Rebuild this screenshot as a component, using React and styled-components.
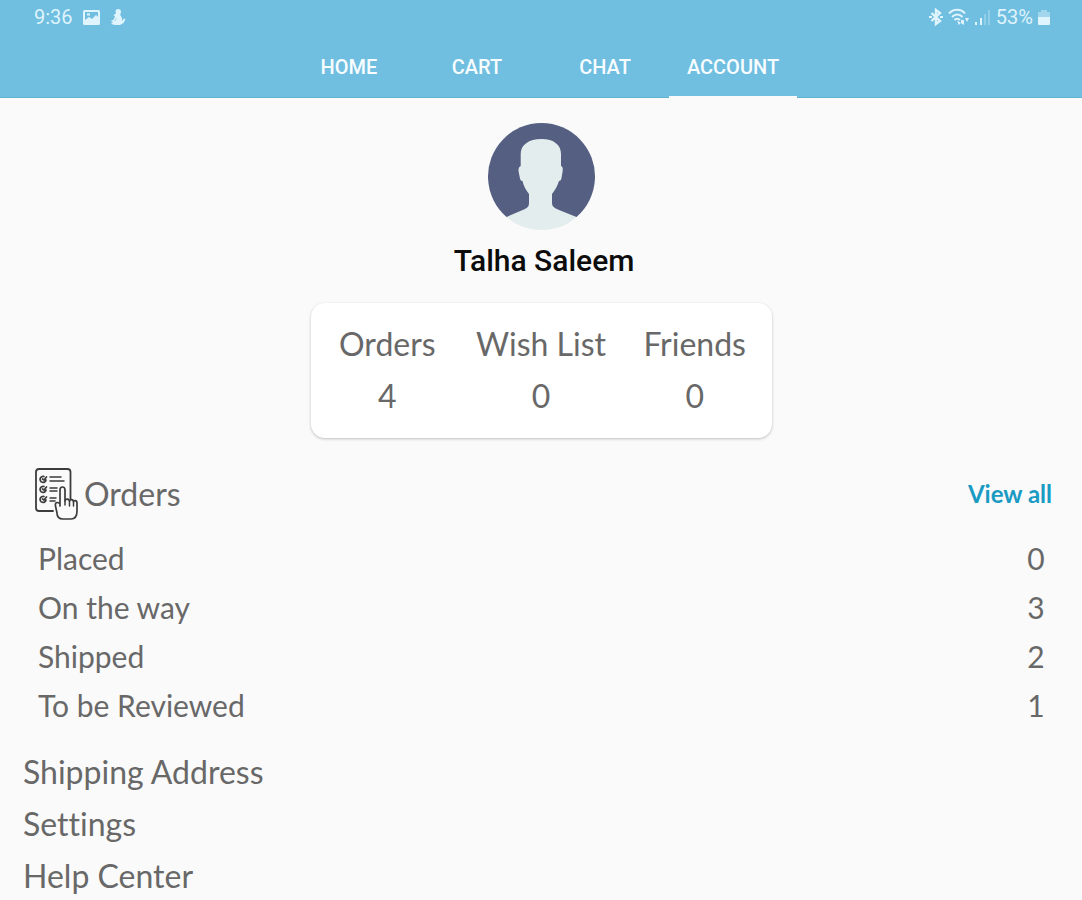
import React, { useState } from "react";
import styled, { createGlobalStyle } from "styled-components";

const GlobalStyle = createGlobalStyle`
  * {
    box-sizing: border-box;
  }

  body {
    margin: 0;
    background: #fafafa;
    color: #686868;
    font-family: Lato, "Liberation Sans", sans-serif;
    font-variant-ligatures: none;
  }
`;

const AppBar = styled.header`
  background: #70bee0;
  box-shadow: inset 0 -1px #62b3d3;
  font-family: Roboto, "Liberation Sans", sans-serif;
`;

const StatusBar = styled.div`
  display: flex;
  align-items: center;
  justify-content: space-between;
  height: 34px;
  padding: 0 32px 0 34px;
  color: #dff4fc;
  font-size: 20px;
`;

const StatusGroup = styled.div`
  display: flex;
  align-items: center;
  gap: ${props => props.$gap}px;

  svg {
    display: block;
  }
`;

const Tabs = styled.nav`
  display: flex;
  justify-content: center;
`;

const Tab = styled.a`
  display: flex;
  align-items: center;
  justify-content: center;
  width: 128px;
  height: 64px;
  padding-top: 4px;
  border-bottom: 2px solid ${props => (props.$active ? "#fafafa" : "transparent")};
  color: #f8fdff;
  font-size: 20px;
  font-weight: 500;
  text-decoration: none;
`;

const Profile = styled.section`
  display: flex;
  flex-direction: column;
  align-items: center;
  padding: 25px 16px 0;

  svg {
    display: block;
  }
`;

const Name = styled.h1`
  margin: 13px 0 24px;
  padding-left: 6px;
  color: #0c0c0c;
  font-family: Roboto, "Liberation Sans", sans-serif;
  font-size: 30px;
  font-weight: 500;
  line-height: 36px;
`;

const Stats = styled.dl`
  display: flex;
  width: 100%;
  max-width: 461px;
  margin: 0;
  padding: 17px 0 18px;
  border-radius: 14px;
  background: #fff;
  box-shadow: 0 1px 3px rgba(0, 0, 0, 0.24);
`;

const Stat = styled.div`
  display: flex;
  flex: 1;
  flex-direction: column;
  align-items: center;
  gap: 4px;
  font-size: 32px;
  line-height: 48px;

  dt,
  dd {
    margin: 0;
    white-space: nowrap;
  }
`;

const Orders = styled.section`
  padding: 28px 30px 0 34px;
`;

const OrdersHead = styled.div`
  display: flex;
  align-items: center;
  gap: 6px;
  height: 56px;
`;

const Title = styled.h2`
  flex: 1;
  margin: 0;
  font-size: 32px;
  font-weight: 400;
  line-height: 40px;
`;

const ViewAll = styled.a`
  color: #1a9bc4;
  font-size: 24px;
  font-weight: 700;
  line-height: 32px;
  text-decoration: none;
`;

const StatusList = styled.ul`
  margin: 12px 0 0;
  padding: 0 0 0 4px;
  list-style: none;
`;

const StatusRow = styled.li`
  display: flex;
  justify-content: space-between;
  font-size: 30px;
  line-height: 49px;
`;

const Count = styled.span`
  width: 32px;
  text-align: center;
`;

const Menu = styled.nav`
  display: flex;
  flex-direction: column;
  align-items: flex-start;
  gap: 8px;
  padding: 20px 23px 0;
`;

const MenuLink = styled.a`
  color: inherit;
  font-size: 32px;
  line-height: 44px;
  text-decoration: none;
`;

const PictureIcon = () => (
  <svg width="17" height="15" viewBox="0 0 17 15" aria-hidden="true">
    <path
      fill="currentColor"
      fillRule="evenodd"
      d="M1.5 0h14A1.5 1.5 0 0 1 17 1.500v12a1.500 1.500 0 0 1-1.500 1.500h-14A1.500 1.500 0 0 1 0 13.500v-12A1.500 1.500 0 0 1 1.500 0zM2 2v8l4-3 3 2 4-4 2 2V2zM4 3.500h3v2H4z"
    />
  </svg>
);

const CleanerIcon = () => (
  <svg width="16" height="17" viewBox="0 0 16 17" aria-hidden="true">
    <path
      fill="currentColor"
      d="M8 0c2 0 3 1.200 3 3 0 1.200-.4 2-1 2.600l2 3.400v3l2-2.500 1.500.7-2 3.800L10 16H5l-4-1 2-2-2.500-1 2.800-1L5 7.500 3.500 6 6 4.500 5.500 2C5.800.7 6.700 0 8 0z"
    />
    <path fill="none" stroke="#a5d8ee" d="M6.500 9L5 12" />
  </svg>
);

const BluetoothIcon = () => (
  <svg width="14" height="18" viewBox="0 0 14 18" aria-hidden="true">
    <path
      fill="none"
      stroke="currentColor"
      strokeWidth="2.400"
      d="M2.500 5l8.500 8-4 3V2l4 3-8.500 8"
    />
    <path fill="currentColor" d="M0 8h3v2H0zM11 8h3v2h-3z" />
  </svg>
);

const WifiIcon = () => (
  <svg width="22" height="18" viewBox="0 0 22 18" aria-hidden="true">
    <g fill="none" stroke="currentColor" strokeWidth="2">
      <path d="M1 5.500c4.500-5 12-5 16 0M4 9c3-3.300 7.500-3.300 10.500 0M6.500 12c1.500-1.800 4-1.800 5.500 0" />
    </g>
    <path fill="currentColor" d="M9.300 12.500L13 15l-2.500 2zM13 12h3v5l-3-2zM17 10h4l-2 4z" />
  </svg>
);

const SignalIcon = () => (
  <svg width="16" height="17" viewBox="0 0 16 17" aria-hidden="true">
    <path fill="currentColor" d="M0 13h2v3H0zM5 9h2v7H5z" />
    <path fill="currentColor" opacity="0.3" d="M9 5h2v11H9zM13 1h2v15h-2z" />
  </svg>
);

const BatteryIcon = () => (
  <svg width="12" height="17" viewBox="0 0 12 17" aria-hidden="true">
    <path fill="currentColor" opacity="0.45" d="M3 1h6v2h2q1 0 1 1v5H0V4q0-1 1-1h2z" />
    <path fill="currentColor" d="M0 8h12v7q0 1-1 1H1q-1 0-1-1z" />
  </svg>
);

const Avatar = () => (
  <svg width="107" height="107" viewBox="0 0 107 107" role="img" aria-label="Avatar">
    <path fill="#545f82" d="M18.500 94A53.500 53.500 0 1 1 88.500 94z" />
    <path
      fill="#e4edee"
      d="M53.500 16C66 16 73 22 73 31v12c2 1 2 3 1.500 6l-1 6c-.3 2-1.200 3-2.500 3-1.500 5-4 9-7 13v9c0 4 3 5 7 7l17.500 7C80 102 68 107 53.500 107S27 102 18.500 94L37 86c3-1.500 4-3 4-6v-9c-3-4-5.500-8-6.500-13-1.500 0-2.300-1-2.600-3l-1.200-6c-.5-3 0-5 2-6V31c0-9 8-15 20.800-15z"
    />
  </svg>
);

const OrdersIcon = () => (
  <svg width="44" height="54" viewBox="0 0 44 54" fill="none" aria-hidden="true">
    <g stroke="#3c3c3c" strokeLinecap="round" strokeLinejoin="round">
      <path
        strokeWidth="1.800"
        d="M19 44H5q-3 0-3-3V5q0-3 3-3h28.500q3 0 3 3v27"
      />
      <g strokeWidth="1.700">
        <path d="M10 9.500a3 3 0 1 0 2 3.500M8.500 12l1.500 1 2.500-3" />
        <path d="M10 19.500a3 3 0 1 0 2 3.500M8.500 22l1.500 1 2.500-3" />
        <path d="M10 29.500a3 3 0 1 0 2 3.500M8.500 32l1.500 1 2.500-3" />
      </g>
      <path strokeWidth="1.500" d="M16 10h11M16 14h14M16 21h7M16 24h7M16 31h6M16 34h5" />
      <path
        fill="#fafafa"
        strokeWidth="1.700"
        d="M26 39V23c0-4 5-4 5 0v11c0-2.500 4.500-2.500 4.500.5 0-2.500 4-2.500 4 .5 0-2 3.500-2 3.500 1v8c0 5-2 8-6 8h-8c-4 0-6-2-6-6l-1.500-7c-.6-3.500 1-4.500 4.500-2.500"
      />
      <path strokeWidth="1.500" d="M31 34v4M35.500 35v4M39.500 35.500v3.500" />
    </g>
  </svg>
);

const tabs = ["HOME", "CART", "CHAT", "ACCOUNT"];

const stats = [
  { label: "Orders", value: 4 },
  { label: "Wish List", value: 0 },
  { label: "Friends", value: 0 }
];

const statuses = [
  { label: "Placed", count: 0 },
  { label: "On the way", count: 3 },
  { label: "Shipped", count: 2 },
  { label: "To be Reviewed", count: 1 }
];

const menu = [
  { title: "Shipping Address", href: "#address" },
  { title: "Settings", href: "#settings" },
  { title: "Help Center", href: "#help" }
];

const App = () => {
  const [active, setActive] = useState("ACCOUNT");

  return (
    <>
      <GlobalStyle />
      <AppBar>
        <StatusBar>
          <StatusGroup $gap={10}>
            <span>9:36</span>
            <PictureIcon />
            <CleanerIcon />
          </StatusGroup>
          <StatusGroup $gap={5}>
            <BluetoothIcon />
            <WifiIcon />
            <SignalIcon />
            <span>53%</span>
            <BatteryIcon />
          </StatusGroup>
        </StatusBar>
        <Tabs>
          {tabs.map(tab => (
            <Tab
              key={tab}
              href={`#${tab.toLowerCase()}`}
              $active={tab === active}
              aria-current={tab === active ? "page" : undefined}
              onClick={() => setActive(tab)}
            >
              {tab}
            </Tab>
          ))}
        </Tabs>
      </AppBar>
      <main>
        <Profile>
          <Avatar />
          <Name>Talha Saleem</Name>
          <Stats>
            {stats.map(stat => (
              <Stat key={stat.label}>
                <dt>{stat.label}</dt>
                <dd>{stat.value}</dd>
              </Stat>
            ))}
          </Stats>
        </Profile>
        <Orders>
          <OrdersHead>
            <OrdersIcon />
            <Title>Orders</Title>
            <ViewAll href="#orders">View all</ViewAll>
          </OrdersHead>
          <StatusList>
            {statuses.map(status => (
              <StatusRow key={status.label}>
                <span>{status.label}</span>
                <Count>{status.count}</Count>
              </StatusRow>
            ))}
          </StatusList>
        </Orders>
        <Menu>
          {menu.map(item => (
            <MenuLink key={item.href} href={item.href}>
              {item.title}
            </MenuLink>
          ))}
        </Menu>
      </main>
    </>
  );
};

export default App;
